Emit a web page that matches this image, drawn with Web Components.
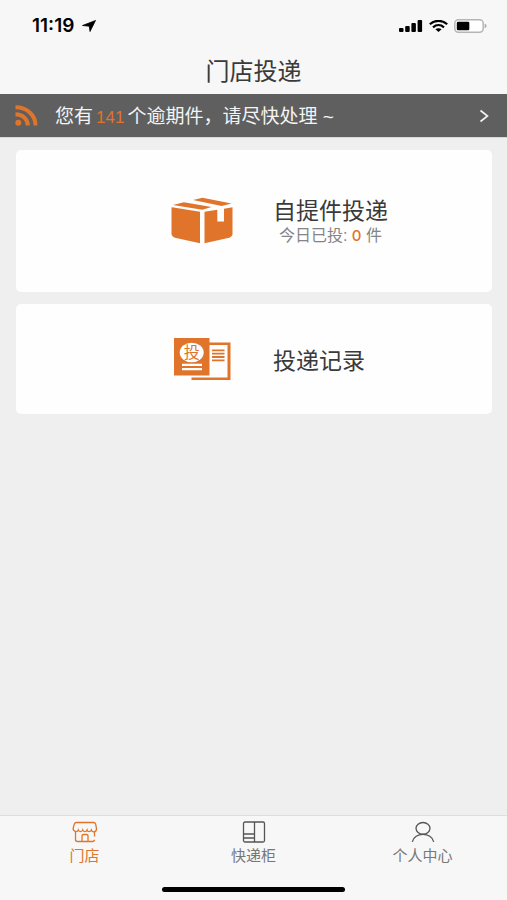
<!DOCTYPE html>
<html lang="zh-CN">
<head>
<meta charset="utf-8">
<meta name="viewport" content="width=device-width, initial-scale=1">
<title>门店投递</title>
<style>
  html, body { margin: 0; }
  body {
    --accent: #e0742a;
    --bar: #f7f7f7;
    background: #efefef;
    color: #3a3a3a;
    font-family: "Liberation Sans", "Noto Sans CJK SC", sans-serif;
  }
</style>
</head>
<body>
<store-page></store-page>
<script>
const define = (name, html) => customElements.define(name, class extends HTMLElement {
  constructor() {
    super();
    const t = document.createElement('template');
    t.innerHTML = html;
    this.attachShadow({ mode: 'open' }).append(t.content.cloneNode(true));
  }
});

define('status-bar', `
<style>
  :host { display: flex; justify-content: space-between; align-items: center; height: 52px; padding: 0 20px 0 32px; color: #000; }
  div { display: flex; align-items: center; gap: 6px; }
  .clock { gap: 8px; }
  time { font: 600 19px/20px Inter, sans-serif; }
  svg { display: block; }
</style>
<div class="clock"><time>11:19</time>
  <svg width="14" height="12" viewBox="0 0 14 12"><path d="M13.5 .5 8 11.5 7.3 6.2 .5 5.5Z" stroke="#000" stroke-width=".8" stroke-linejoin="round"/></svg></div>
<div>
  <svg width="24" height="12" viewBox="0 0 24 12"><rect y="8" width="4.5" height="4" rx="1"/><rect x="6.2" y="6" width="4.5" height="6" rx="1"/><rect x="12.4" y="3" width="4.5" height="9" rx="1"/><rect x="18.6" width="4.5" height="12" rx="1"/></svg>
  <svg width="19" height="12" viewBox="0 0 19 12"><g fill="none" stroke="#000" stroke-width="2.2"><path d="M.8 4.3C5.8-.3 13.2-.3 18.2 4.3"/><path d="M4 7.3c3.3-2.9 7.7-2.9 11 0"/></g><path d="M6.4 9.3c1.9-1.5 4.3-1.5 6.2 0L9.5 12Z"/></svg>
  <svg width="33" height="14" viewBox="0 0 33 14"><rect x=".8" y=".8" width="28.4" height="12.4" rx="3.6" fill="#fff" stroke="#b5b5b5" stroke-width="1.5"/><rect x="2.8" y="2.8" width="12.5" height="8.4" rx="1.3"/><path d="M30.7 4.8c2.4.7 2.4 3.7 0 4.4Z" fill="#aaa"/></svg>
</div>`);

define('page-title', `
<style>
  :host { display: block; padding: 4px 0 6px; text-align: center; }
  h1 { margin: 0; font-size: 24px; line-height: 32px; font-weight: 400; }
</style>
<h1><slot></slot></h1>`);

define('notice-bar', `
<style>
  :host { display: block; background: #5f5f5f; border-bottom: 1px solid #d8d8d8; }
  a { display: flex; align-items: center; height: 43px; padding: 0 18px 0 15px; color: #f4f4f4; text-decoration: none; font-size: 19px; line-height: 24px; }
  p { flex: 1; margin: 0 0 0 17px; padding-top: 3px; white-space: nowrap; }
  svg { display: block; flex: none; }
</style>
<a href="#overdue">
  <svg width="23" height="21" viewBox="0 0 23 21"><circle cx="3.3" cy="17.8" r="3" fill="var(--accent)"/><g fill="none" stroke="var(--accent)" stroke-width="4"><path d="M.5 9.3C7.5 9.3 12.8 14 12.8 20.5"/><path d="M.5 2.3C12 2.3 20.5 10 20.5 20.5"/></g></svg>
  <p><slot></slot></p>
  <svg width="10" height="14" viewBox="0 0 10 14"><path d="M1.5 1.5 8.5 7l-7 5.5" fill="none" stroke="#f4f4f4" stroke-width="1.6"/></svg>
</a>`);

define('action-card', `
<style>
  :host { display: block; }
  a { display: grid; grid-template-columns: 46% 1fr; align-items: center; box-sizing: border-box; min-height: 110px; padding: var(--card-padding, 0) 0; background: #fefefe; border-radius: 5px; color: inherit; text-decoration: none; }
  .icon { display: flex; justify-content: flex-end; }
  .text { justify-self: start; margin-left: 38px; padding-top: 4px; text-align: center; }
  h2 { margin: 0; font-size: 23px; line-height: 26px; font-weight: 400; }
</style>
<a href="#open"><span class="icon"><slot name="icon"></slot></span>
<div class="text"><h2><slot></slot></h2><slot name="detail"></slot></div></a>`);

define('parcel-icon', `
<style>:host { display: block; } svg { display: block; }</style>
<svg width="64" height="48" viewBox="0 0 64 48" fill="var(--accent)">
  <path d="M1 10.3 29 14.8V46.3L4 40.8Q.5 39.5 .5 36.8V10.6Z"/>
  <path d="M33.5 14.8 46.3 12.8V24.5H53V11.8L61.5 10.3V37Q61.5 39.4 58.2 40.7L33.5 46.3Z"/>
  <path d="M2 8 12.8 5.3 40.5 9.9 31.3 12.8Z"/>
  <path d="M22 3 31.5 .7 60.5 6.6 50.7 9Z"/>
</svg>`);

define('record-icon', `
<style>:host { display: block; } svg { display: block; } text { font: 400 16px "Noto Sans CJK SC", sans-serif; }</style>
<svg width="63" height="44" viewBox="0 0 63 44" fill="var(--accent)">
  <path d="M37 5.5H58.5V43H19.5V40.5H55.5V8H37Z"/>
  <rect x="2" y="1" width="35.5" height="37.5"/>
  <ellipse cx="19.7" cy="15.5" rx="12" ry="9.8" fill="#fff"/>
  <text x="19.7" y="21.3" text-anchor="middle">投</text>
  <path d="M10 26.8h20v2.3H10ZM10 31h20v2.3H10Z" fill="#fff"/>
  <path d="M40 12.5h12.5v1.8H40ZM40 15.8h12.5v1.8H40ZM40 19.1h12.5v1.8H40ZM40 22.4h12.5v1.8H40Z"/>
</svg>`);

define('delivered-count', `
<style>:host { display: block; color: #858585; font-size: 16px; line-height: 24px; } b { color: var(--accent); font: 500 15px/20px Inter, sans-serif; }</style>
今日已投: <b><slot></slot></b> 件`);

define('tab-item', `
<style>
  :host { display: block; flex: 1; color: #777; }
  :host([active]) { color: var(--accent); }
  a { display: flex; flex-direction: column; align-items: center; gap: 3px; padding-top: 5px; color: inherit; text-decoration: none; font-size: 15px; line-height: 20px; }
</style>
<a href="#tab"><slot name="icon"></slot><span><slot></slot></span></a>`);

define('tab-bar', `
<style>
  :host { display: block; background: var(--bar); border-top: 1px solid #dedede; }
  nav { display: flex; height: 71px; }
  .home { width: 36%; height: 5px; margin: 0 auto 8px; border-radius: 3px; background: #000; }
  svg { display: block; fill: none; stroke: #555; stroke-width: 1.3; }
  .shop { stroke: var(--accent); }
</style>
<nav>
  <tab-item active><svg class="shop" slot="icon" width="26" height="22" viewBox="0 0 26 22"><path d="M4.5 1.5h17q1.8 0 2.2 1.8l.8 4.2c.2 4-4.4 4.3-5.2 1.4-1 2.3-3.6 2.3-4.2 0-1 2.3-3.6 2.3-4.4 0-.8 2.3-3.6 2.3-4.4 0C5.2 11.8.8 10.6 1.2 7.2L2.2 3.3Q2.7 1.5 4.5 1.5ZM3.5 10.5v8.3q0 1.7 2 1.7h15q2 0 2-1.7M22.5 10.5v5M10 20.3v-5.5q0-1.3 1.5-1.3h3q1.5 0 1.5 1.3v5.5"/></svg>门店</tab-item>
  <tab-item><svg slot="icon" width="24" height="22" viewBox="0 0 24 22"><rect x="1.5" y="1" width="21" height="20" rx="1.5"/><path d="M12.5 1v20M1.5 13h11M1.5 17h11"/></svg>快递柜</tab-item>
  <tab-item><svg slot="icon" width="24" height="22" viewBox="0 0 24 22"><ellipse cx="12" cy="7.3" rx="7" ry="5.8"/><path d="M1.3 20.8C3.2 10.8 20.8 10.8 22.7 20.8"/></svg>个人中心</tab-item>
</nav>
<div class="home"></div>`);

define('store-page', `
<style>
  :host { display: flex; flex-direction: column; min-height: 100vh; }
  header { background: var(--bar); }
  main { flex: 1; display: flex; flex-direction: column; gap: 12px; padding: 12px 15px 12px 16px; }
  .pickup { --card-padding: 44px; }
  .count { margin: 0 3px; color: var(--accent); font-size: 17px; }
</style>
<header><status-bar></status-bar><page-title>门店投递</page-title></header>
<notice-bar>您有<span class="count">141</span>个逾期件，请尽快处理 ~</notice-bar>
<main>
  <action-card class="pickup"><parcel-icon slot="icon"></parcel-icon>自提件投递<delivered-count slot="detail">0</delivered-count></action-card>
  <action-card><record-icon slot="icon"></record-icon>投递记录</action-card>
</main>
<tab-bar></tab-bar>`);
</script>
</body>
</html>
